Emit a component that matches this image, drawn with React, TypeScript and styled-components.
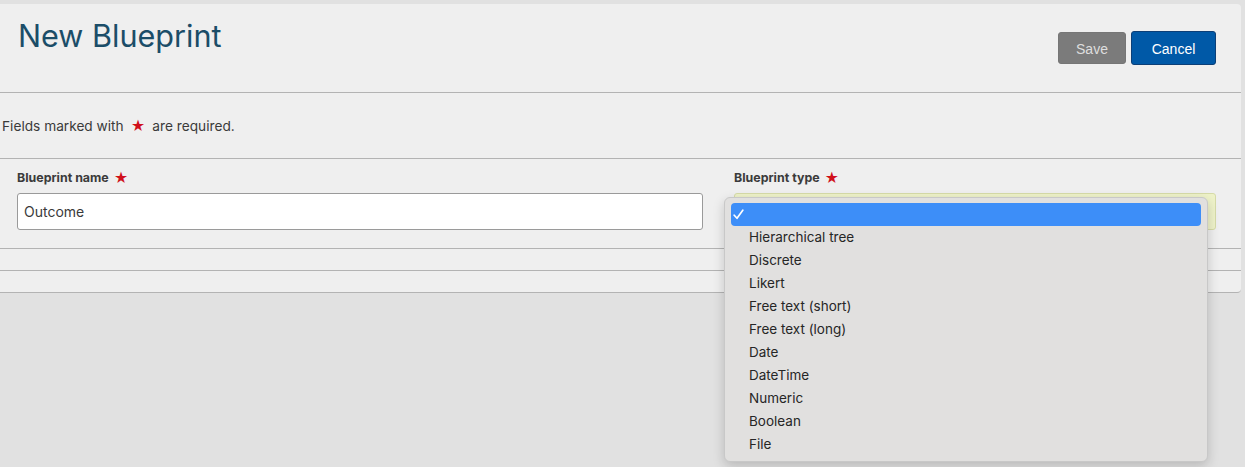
import React, { ReactElement } from "react";
import styled, { createGlobalStyle } from "styled-components";

const GlobalStyle = createGlobalStyle`
  html, body {
    margin: 0;
    padding: 0;
    background: #e1e1e1;
    font-family: "Inter", "Liberation Sans", sans-serif;
  }
`;

const BLUEPRINT_TYPES = [
  "",
  "Hierarchical tree",
  "Discrete",
  "Likert",
  "Free text (short)",
  "Free text (long)",
  "Date",
  "DateTime",
  "Numeric",
  "Boolean",
  "File",
];

const Page = styled.div`
  height: 467px;
  padding: 4px 4px 0 0;
  box-sizing: border-box;
`;

const Panel = styled.div`
  background: #efefef;
  border-radius: 0 4px 4px 0;
  border-bottom: 1px solid #b3b3b3;
`;

const Header = styled.div`
  display: flex;
  justify-content: space-between;
  align-items: flex-start;
  height: 89px;
  padding: 14px 25px 0 18px;
  box-sizing: border-box;
  border-bottom: 1px solid #b3b3b3;
`;

const Title = styled.h1`
  margin: 0;
  font-size: 30.6px;
  line-height: 36px;
  font-weight: 400;
  color: #1b4d68;
`;

const Actions = styled.div`
  display: flex;
  align-items: center;
  gap: 5px;
  margin-top: 13px;
`;

const Button = styled.button<{ primary?: boolean }>`
  font-family: "Liberation Sans", Arial, sans-serif;
  font-size: 14px;
  border-radius: 3px;
  cursor: pointer;
  padding-top: 2px;
  height: ${(p) => (p.primary ? 34 : 32)}px;
  width: ${(p) => (p.primary ? 85 : 68)}px;
  background: ${(p) => (p.primary ? "#0059a7" : "#7b7b7b")};
  color: ${(p) => (p.primary ? "#ffffff" : "#dedede")};
  border: 1px solid ${(p) => (p.primary ? "#0c3f77" : "#767676")};
`;

const Notice = styled.div`
  height: 65px;
  display: flex;
  align-items: center;
  padding-left: 2px;
  font-size: 13.7px;
  color: #3a3a3a;
  border-bottom: 1px solid #b3b3b3;
`;

const Star = styled.span<{ gap?: number }>`
  color: #d0101b;
  font-size: 14px;
  line-height: 1;
  margin: 0 ${(p) => p.gap ?? 5}px;
`;

const FormRow = styled.div`
  display: grid;
  grid-template-columns: 686px 482px;
  column-gap: 31px;
  padding: 11px 0 18px 17px;
  border-bottom: 1px solid #b3b3b3;
`;

const Field = styled.div`
  display: flex;
  flex-direction: column;
  gap: 8px;
`;

const Label = styled.label`
  display: flex;
  align-items: center;
  height: 15px;
  font-size: 12.4px;
  font-weight: 700;
  color: #3b3b3b;
`;

const TextInput = styled.div`
  height: 37px;
  box-sizing: border-box;
  background: #ffffff;
  border: 1px solid #9a9a9a;
  border-radius: 3px;
  padding: 0 6px;
  display: flex;
  align-items: center;
  font-size: 14px;
  color: #3a3a3a;
`;

const SelectBox = styled.div`
  position: relative;
  height: 37px;
  box-sizing: border-box;
  background: #eef2c9;
  border: 1px solid #d6dba8;
  border-radius: 3px;
`;

const Menu = styled.ul`
  position: absolute;
  left: -11px;
  top: 3px;
  width: 484px;
  margin: 0;
  padding: 5px 6px 5px;
  box-sizing: border-box;
  list-style: none;
  background: #e1e0df;
  border: 1px solid #c8c8c8;
  border-radius: 6px;
  box-shadow: 0 4px 12px rgba(0, 0, 0, 0.18);
  z-index: 10;
`;

const MenuItem = styled.li<{ selected?: boolean }>`
  position: relative;
  height: 23px;
  line-height: 23px;
  padding-left: 18px;
  font-size: 13.5px;
  color: ${(p) => (p.selected ? "#ffffff" : "#262626")};
  background: ${(p) => (p.selected ? "#3d8ef8" : "transparent")};
  border-radius: 4px;
`;

const Check = styled.svg`
  position: absolute;
  left: 2px;
  top: 6px;
`;

const Spacer = styled.div<{ last?: boolean }>`
  height: 21px;
  border-bottom: ${(p) => (p.last ? "none" : "1px solid #b3b3b3")};
`;

export default function App(): ReactElement {
  return (
    <>
      <GlobalStyle />
      <Page>
        <Panel>
          <Header>
            <Title>New Blueprint</Title>
            <Actions>
              <Button>Save</Button>
              <Button primary>Cancel</Button>
            </Actions>
          </Header>
          <Notice>
            Fields marked with<Star gap={7}>★</Star>are required.
          </Notice>
          <FormRow>
            <Field>
              <Label>
                Blueprint name<Star>★</Star>
              </Label>
              <TextInput>Outcome</TextInput>
            </Field>
            <Field>
              <Label>
                Blueprint type<Star>★</Star>
              </Label>
              <SelectBox>
                <Menu>
                  {BLUEPRINT_TYPES.map((type, index) => (
                    <MenuItem key={index} selected={index === 0}>
                      {index === 0 && (
                        <Check width="11" height="11" viewBox="0 0 11 11">
                          <path
                            d="M1.2 6.2 L4 9.3 L9.8 1.2"
                            fill="none"
                            stroke="#ffffff"
                            strokeWidth="1.7"
                            strokeLinecap="round"
                            strokeLinejoin="round"
                          />
                        </Check>
                      )}
                      {type}
                    </MenuItem>
                  ))}
                </Menu>
              </SelectBox>
            </Field>
          </FormRow>
          <Spacer />
          <Spacer last />
        </Panel>
      </Page>
    </>
  );
}
